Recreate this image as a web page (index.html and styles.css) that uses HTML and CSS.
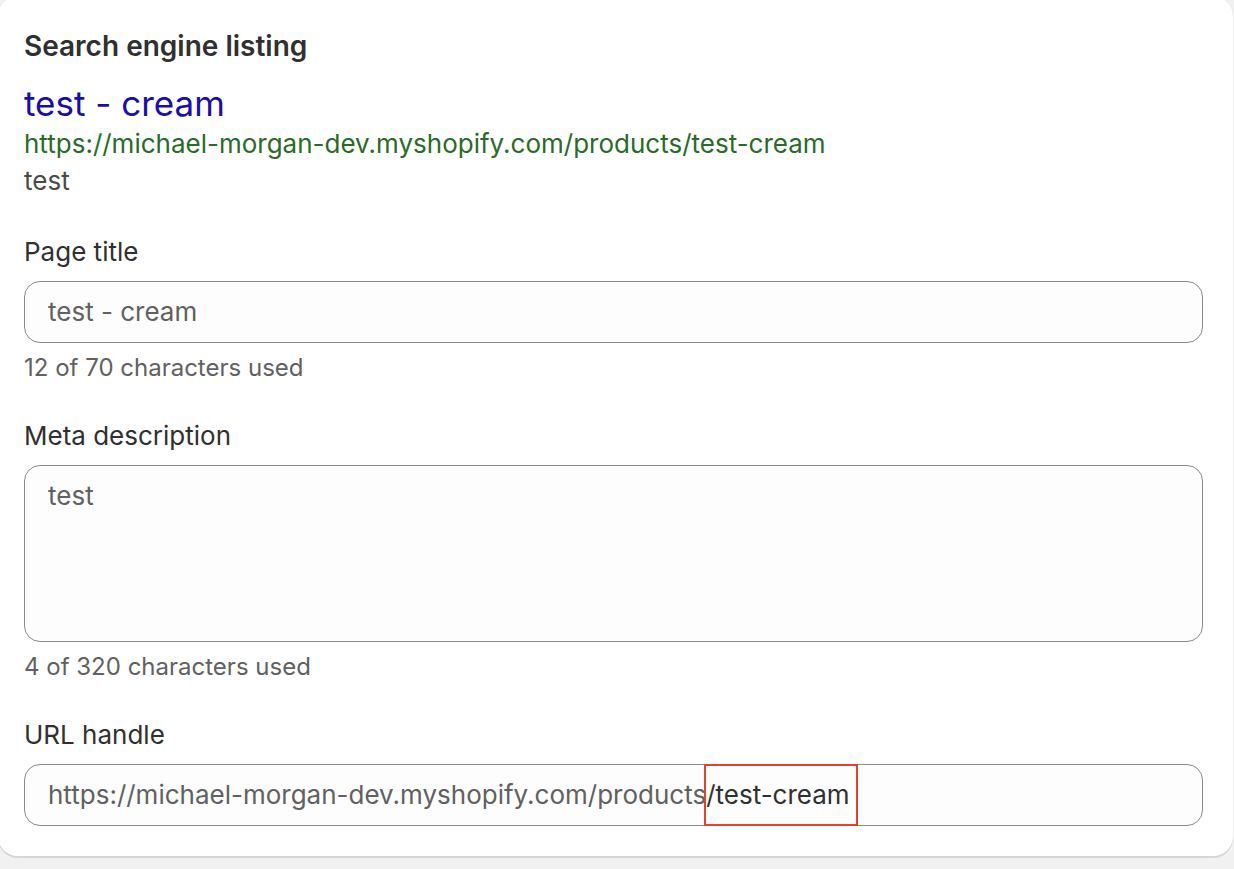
FILE: index.html
```html
<!DOCTYPE html>
<html lang="en">
<head>
<meta charset="utf-8">
<title>Search engine listing</title>
<link rel="stylesheet" href="styles.css">
</head>
<body>
<section class="card">
  <h2 class="card-title">Search engine listing</h2>
  <div class="preview">
    <div class="preview-title">test - cream</div>
    <div class="preview-url">https://michael-morgan-dev.myshopify.com/products/test-cream</div>
    <div class="preview-desc">test</div>
  </div>

  <div class="field">
    <label class="label">Page title</label>
    <div class="input">test - cream</div>
    <div class="help">12 of 70 characters used</div>
  </div>

  <div class="field">
    <label class="label">Meta description</label>
    <div class="input textarea">test</div>
    <div class="help">4 of 320 characters used</div>
  </div>

  <div class="field">
    <label class="label">URL handle</label>
    <div class="input url"><span class="prefix">https://michael-morgan-dev.myshopify.com/products</span><span class="handle">/test-cream<span class="highlight"></span></span></div>
  </div>
</section>
</body>
</html>
```

FILE: styles.css
```css
html, body {
  margin: 0;
  padding: 0;
}
body {
  background: #f1f1f1;
  font-family: Inter, "Noto Sans", "Liberation Sans", sans-serif;
  color: #303030;
  height: 869px;
  overflow: hidden;
}
.card {
  margin: -4px 1px 0 -2px;
  background: #ffffff;
  border-radius: 20px;
  padding: 32px 30px 30px 26px;
  box-shadow: 0 2px 0 #d6d6d6, 0 0 1px rgba(0,0,0,0.15);
  display: flex;
  flex-direction: column;
}
.card-title {
  margin: 0;
  font-size: 28px;
  font-weight: 600;
  line-height: 36px;
  color: #303030;
}
.preview {
  display: flex;
  flex-direction: column;
  margin-top: 18px;
  margin-bottom: 3px;
}
.preview-title {
  font-size: 35px;
  line-height: 43px;
  color: #1a0dab;
}
.preview-url {
  font-size: 26px;
  line-height: 38px;
  color: #2a6a2a;
}
.preview-desc {
  font-size: 26px;
  line-height: 36px;
  color: #4a4a4a;
}
.field {
  display: flex;
  flex-direction: column;
  margin-top: 32px;
}
.label {
  font-size: 26px;
  line-height: 36px;
  color: #303030;
  margin-bottom: 11px;
}
.input {
  box-sizing: border-box;
  height: 62px;
  border: 1px solid #8a8a8a;
  border-radius: 16px;
  background: #fdfdfd;
  padding: 0 23px;
  font-size: 26px;
  line-height: 60px;
  color: #616161;
}
.textarea {
  height: 177px;
  line-height: 36px;
  padding-top: 12px;
}
.help {
  font-size: 24px;
  line-height: 36px;
  color: #616161;
  margin-top: 7px;
}
.url {
  display: flex;
}
.handle {
  position: relative;
  color: #303030;
}
.highlight {
  position: absolute;
  left: -2px;
  right: -8px;
  top: -1px;
  bottom: -1px;
  border: 2px solid #e2432e;
}
```
